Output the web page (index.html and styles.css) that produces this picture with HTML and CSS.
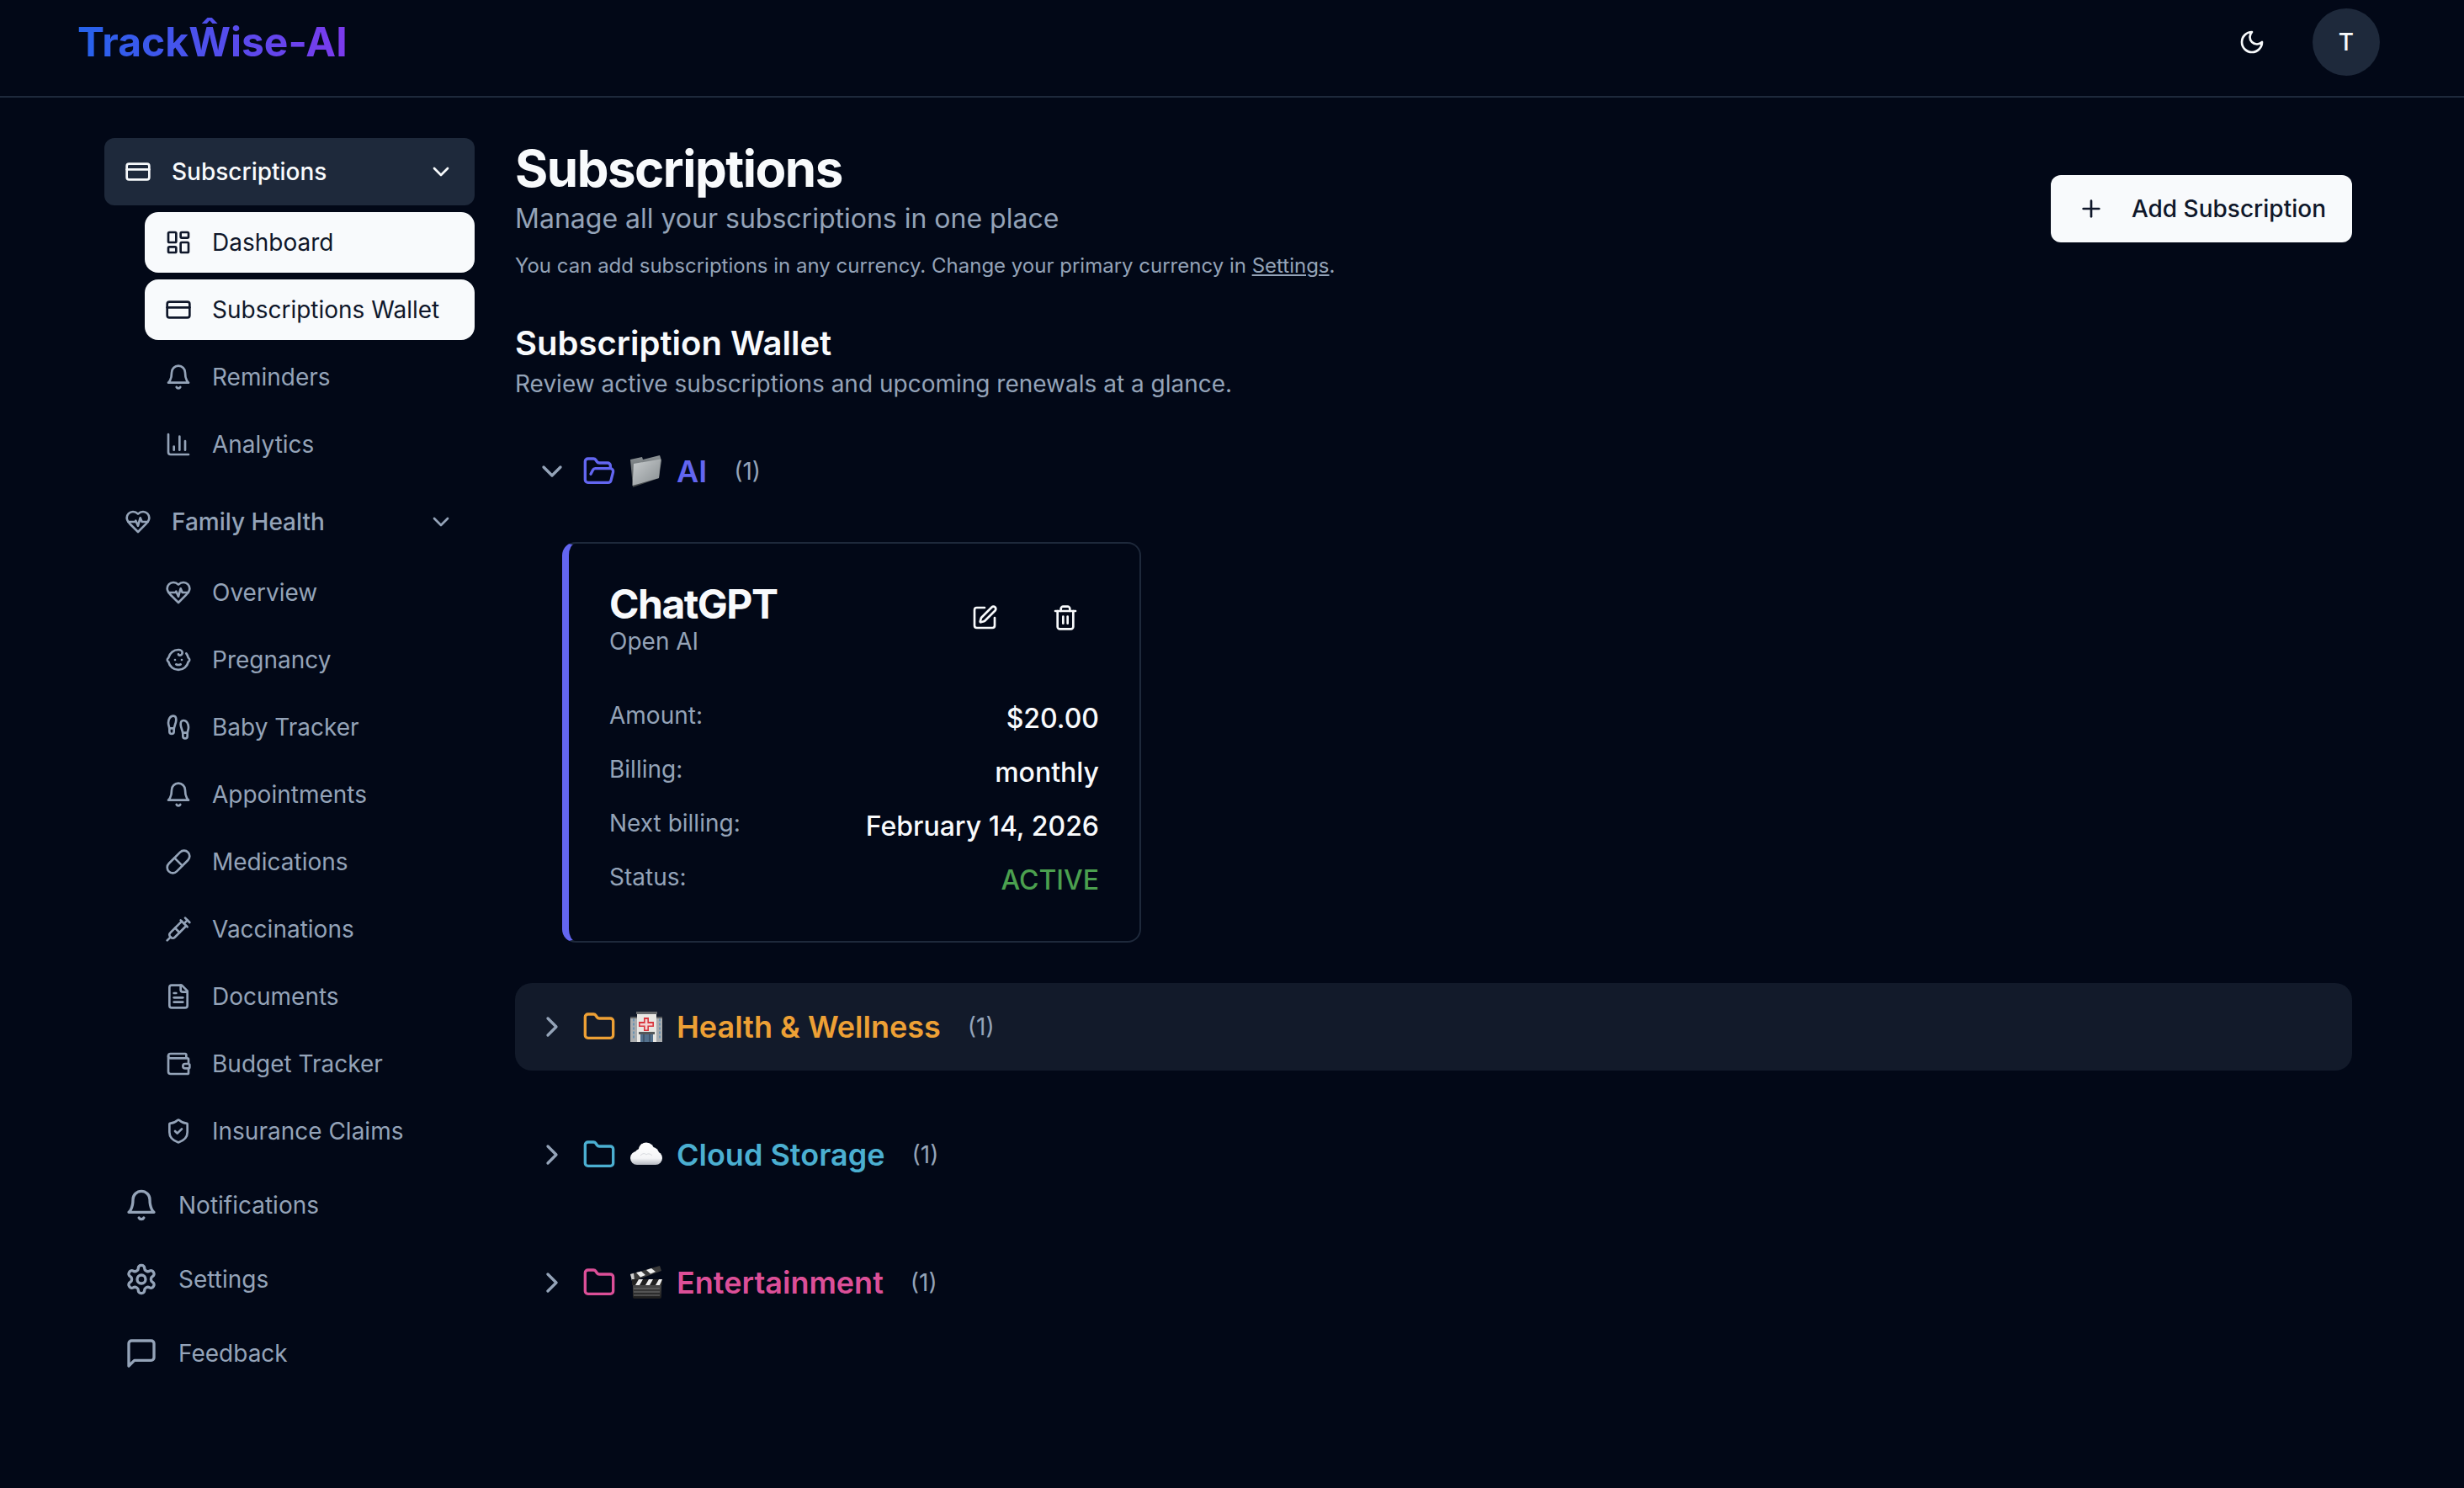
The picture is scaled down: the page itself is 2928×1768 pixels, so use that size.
FILE: index.html
```html
<!DOCTYPE html>
<html lang="en">
<head>
<meta charset="utf-8">
<title>TrackWise-AI Subscriptions</title>
<link rel="stylesheet" href="styles.css">
</head>
<body>
<svg class="sprite" aria-hidden="true">
  <defs>
    <linearGradient id="g-folder-back" x1="0" y1="0" x2="0" y2="1"><stop offset="0" stop-color="#8d9396"/><stop offset="1" stop-color="#3f4346"/></linearGradient>
    <linearGradient id="g-folder-front" x1="0" y1="0" x2="1" y2="1"><stop offset="0" stop-color="#c9cdcf"/><stop offset="1" stop-color="#878d90"/></linearGradient>
    <linearGradient id="g-cloud" gradientUnits="userSpaceOnUse" x1="0" y1="6" x2="0" y2="32"><stop offset="0" stop-color="#ffffff"/><stop offset=".7" stop-color="#f4f5f7"/><stop offset="1" stop-color="#b4b8c0"/></linearGradient>
    <linearGradient id="g-clap" x1="0" y1="0" x2="0" y2="1"><stop offset="0" stop-color="#4a4a4a"/><stop offset="1" stop-color="#1c1c1c"/></linearGradient>
  </defs>
  <symbol id="i-card" viewBox="0 0 24 24"><rect x="2" y="5" width="20" height="14" rx="2"/><path d="M2 10h20"/></symbol>
  <symbol id="i-down" viewBox="0 0 24 24"><path d="m6 9 6 6 6-6"/></symbol>
  <symbol id="i-right" viewBox="0 0 24 24"><path d="m9 18 6-6-6-6"/></symbol>
  <symbol id="i-dash" viewBox="0 0 24 24"><rect x="3" y="3" width="7" height="9" rx="1"/><rect x="14" y="3" width="7" height="5" rx="1"/><rect x="14" y="12" width="7" height="9" rx="1"/><rect x="3" y="16" width="7" height="5" rx="1"/></symbol>
  <symbol id="i-bell" viewBox="0 0 24 24"><path d="M6 8a6 6 0 0 1 12 0c0 7 3 9 3 9H3s3-2 3-9"/><path d="M10.3 21a1.94 1.94 0 0 0 3.4 0"/></symbol>
  <symbol id="i-chart" viewBox="0 0 24 24"><path d="M3 3v16a2 2 0 0 0 2 2h16"/><path d="M18 17V9"/><path d="M13 17V5"/><path d="M8 17v-3"/></symbol>
  <symbol id="i-heart" viewBox="0 0 24 24"><path d="M19 14c1.49-1.46 3-3.21 3-5.5A5.5 5.5 0 0 0 16.5 3c-1.76 0-3 .5-4.5 2-1.5-1.5-2.74-2-4.5-2A5.5 5.5 0 0 0 2 8.5c0 2.3 1.5 4.05 3 5.5l7 7Z"/><path d="M3.22 12H9.5l.5-1 2 4.5 2-7 1.5 3.5h5.27"/></symbol>
  <symbol id="i-baby" viewBox="0 0 24 24"><path d="M9 12h.01"/><path d="M15 12h.01"/><path d="M10 16c.5.3 1.2.5 2 .5s1.5-.2 2-.5"/><path d="M19 6.3a9 9 0 0 1 1.8 3.9 2 2 0 0 1 0 3.6 9 9 0 0 1-17.6 0 2 2 0 0 1 0-3.6A9 9 0 0 1 12 3c2 0 3.5 1.1 3.5 2.5s-.9 2.5-2 2.5c-.8 0-1.5-.4-1.5-1"/></symbol>
  <symbol id="i-feet" viewBox="0 0 24 24"><path d="M4 16v-2.38C4 11.5 2.97 10.5 3 8c.03-2.72 1.49-6 4.5-6C9.37 2 10 3.8 10 5.5c0 3.11-2 5.66-2 8.68V16a2 2 0 1 1-4 0Z"/><path d="M20 20v-2.38c0-2.12 1.03-3.12 1-5.62-.03-2.72-1.49-6-4.5-6C14.63 6 14 7.8 14 9.5c0 3.11 2 5.66 2 8.68V20a2 2 0 1 0 4 0Z"/><path d="M16 17h4"/><path d="M4 13h4"/></symbol>
  <symbol id="i-pill" viewBox="0 0 24 24"><path d="m10.5 20.5 10-10a4.95 4.95 0 1 0-7-7l-10 10a4.95 4.95 0 1 0 7 7Z"/><path d="m8.5 8.5 7 7"/></symbol>
  <symbol id="i-syringe" viewBox="0 0 24 24"><path d="m18 2 4 4"/><path d="m17 7 3-3"/><path d="M19 9 8.7 19.3c-1 1-2.5 1-3.4 0l-.6-.6c-1-1-1-2.5 0-3.4L15 5"/><path d="m9 11 4 4"/><path d="m5 19-3 3"/><path d="m14 4 6 6"/></symbol>
  <symbol id="i-file" viewBox="0 0 24 24"><path d="M15 2H6a2 2 0 0 0-2 2v16a2 2 0 0 0 2 2h12a2 2 0 0 0 2-2V7Z"/><path d="M14 2v4a2 2 0 0 0 2 2h4"/><path d="M10 9H8"/><path d="M16 13H8"/><path d="M16 17H8"/></symbol>
  <symbol id="i-wallet" viewBox="0 0 24 24"><path d="M19 7V4a1 1 0 0 0-1-1H5a2 2 0 0 0 0 4h15a1 1 0 0 1 1 1v4h-3a2 2 0 0 0 0 4h3a1 1 0 0 0 1-1v-2a1 1 0 0 0-1-1"/><path d="M3 5v14a2 2 0 0 0 2 2h15a1 1 0 0 0 1-1v-4"/></symbol>
  <symbol id="i-shield" viewBox="0 0 24 24"><path d="M20 13c0 5-3.5 7.5-7.66 8.95a1 1 0 0 1-.67-.01C7.5 20.5 4 18 4 13V6a1 1 0 0 1 1-1c2 0 4.5-1.2 6.24-2.72a1.17 1.17 0 0 1 1.52 0C14.51 3.81 17 5 19 5a1 1 0 0 1 1 1z"/><path d="m9 12 2 2 4-4"/></symbol>
  <symbol id="i-gear" viewBox="0 0 24 24"><path d="M12.22 2h-.44a2 2 0 0 0-2 2v.18a2 2 0 0 1-1 1.73l-.43.25a2 2 0 0 1-2 0l-.15-.08a2 2 0 0 0-2.73.73l-.22.38a2 2 0 0 0 .73 2.73l.15.1a2 2 0 0 1 1 1.72v.51a2 2 0 0 1-1 1.74l-.15.09a2 2 0 0 0-.73 2.73l.22.38a2 2 0 0 0 2.73.73l.15-.08a2 2 0 0 1 2 0l.43.25a2 2 0 0 1 1 1.73V20a2 2 0 0 0 2 2h.44a2 2 0 0 0 2-2v-.18a2 2 0 0 1 1-1.73l.43-.25a2 2 0 0 1 2 0l.15.08a2 2 0 0 0 2.73-.73l.22-.39a2 2 0 0 0-.73-2.73l-.15-.08a2 2 0 0 1-1-1.74v-.5a2 2 0 0 1 1-1.74l.15-.09a2 2 0 0 0 .73-2.73l-.22-.38a2 2 0 0 0-2.73-.73l-.15.08a2 2 0 0 1-2 0l-.43-.25a2 2 0 0 1-1-1.73V4a2 2 0 0 0-2-2z"/><circle cx="12" cy="12" r="3"/></symbol>
  <symbol id="i-msg" viewBox="0 0 24 24"><path d="M21 15a2 2 0 0 1-2 2H7l-4 4V5a2 2 0 0 1 2-2h14a2 2 0 0 1 2 2z"/></symbol>
  <symbol id="i-moon" viewBox="0 0 24 24"><path d="M12 3a6 6 0 0 0 9 9 9 9 0 1 1-9-9Z"/></symbol>
  <symbol id="i-plus" viewBox="0 0 24 24"><path d="M5 12h14"/><path d="M12 5v14"/></symbol>
  <symbol id="i-folder" viewBox="0 0 24 24"><path d="M20 20a2 2 0 0 0 2-2V8a2 2 0 0 0-2-2h-7.9a2 2 0 0 1-1.69-.9L9.6 3.9A2 2 0 0 0 7.93 3H4a2 2 0 0 0-2 2v13a2 2 0 0 0 2 2Z"/></symbol>
  <symbol id="i-folder-open" viewBox="0 0 24 24"><path d="m6 14 1.5-2.9A2 2 0 0 1 9.24 10H20a2 2 0 0 1 1.94 2.5l-1.54 6a2 2 0 0 1-1.95 1.5H4a2 2 0 0 1-2-2V5a2 2 0 0 1 2-2h3.9a2 2 0 0 1 1.69.9l.81 1.2a2 2 0 0 0 1.67.9H18a2 2 0 0 1 2 2v2"/></symbol>
  <symbol id="i-pen" viewBox="0 0 24 24"><path d="M12 3H5a2 2 0 0 0-2 2v14a2 2 0 0 0 2 2h14a2 2 0 0 0 2-2v-7"/><path d="M18.375 2.625a1 1 0 0 1 3 3l-9.013 9.014a2 2 0 0 1-.853.505l-2.873.84a.5.5 0 0 1-.62-.62l.84-2.873a2 2 0 0 1 .506-.852z"/></symbol>
  <symbol id="i-trash" viewBox="0 0 24 24"><path d="M3 6h18"/><path d="M19 6v14c0 1-1 2-2 2H7c-1 0-2-1-2-2V6"/><path d="M8 6V4c0-1 1-2 2-2h4c1 0 2 1 2 2v2"/><path d="M10 11v6"/><path d="M14 11v6"/></symbol>
</svg>

<header class="topbar">
  <div class="logo">TrackŴise-AI</div>
  <div class="top-actions">
    <button class="icon-btn light"><svg class="icon i32"><use href="#i-moon"/></svg></button>
    <div class="avatar">T</div>
  </div>
</header>

<div class="layout">
  <nav class="sidebar">
    <div class="nav-group">
      <div class="nav-parent active"><svg class="icon i32"><use href="#i-card"/></svg><span class="grow">Subscriptions</span><svg class="icon i32"><use href="#i-down"/></svg></div>
      <div class="nav-sub">
        <a class="nav-item selected"><svg class="icon i32"><use href="#i-dash"/></svg>Dashboard</a>
        <a class="nav-item selected"><svg class="icon i32"><use href="#i-card"/></svg>Subscriptions Wallet</a>
        <a class="nav-item"><svg class="icon i32"><use href="#i-bell"/></svg>Reminders</a>
        <a class="nav-item"><svg class="icon i32"><use href="#i-chart"/></svg>Analytics</a>
      </div>
    </div>
    <div class="nav-group">
      <div class="nav-parent"><svg class="icon i32"><use href="#i-heart"/></svg><span class="grow">Family Health</span><svg class="icon i32"><use href="#i-down"/></svg></div>
      <div class="nav-sub">
        <a class="nav-item"><svg class="icon i32"><use href="#i-heart"/></svg>Overview</a>
        <a class="nav-item"><svg class="icon i32"><use href="#i-baby"/></svg>Pregnancy</a>
        <a class="nav-item"><svg class="icon i32"><use href="#i-feet"/></svg>Baby Tracker</a>
        <a class="nav-item"><svg class="icon i32"><use href="#i-bell"/></svg>Appointments</a>
        <a class="nav-item"><svg class="icon i32"><use href="#i-pill"/></svg>Medications</a>
        <a class="nav-item"><svg class="icon i32"><use href="#i-syringe"/></svg>Vaccinations</a>
        <a class="nav-item"><svg class="icon i32"><use href="#i-file"/></svg>Documents</a>
        <a class="nav-item"><svg class="icon i32"><use href="#i-wallet"/></svg>Budget Tracker</a>
        <a class="nav-item"><svg class="icon i32"><use href="#i-shield"/></svg>Insurance Claims</a>
      </div>
    </div>
    <a class="nav-top"><svg class="icon i40"><use href="#i-bell"/></svg>Notifications</a>
    <a class="nav-top"><svg class="icon i40"><use href="#i-gear"/></svg>Settings</a>
    <a class="nav-top"><svg class="icon i40"><use href="#i-msg"/></svg>Feedback</a>
  </nav>

  <main class="content">
    <section class="page-head">
      <div>
        <h1 class="page-title">Subscriptions</h1>
        <p class="page-sub">Manage all your subscriptions in one place</p>
        <p class="page-note">You can add subscriptions in any currency. Change your primary currency in <a class="link">Settings</a>.</p>
      </div>
      <button class="add-btn"><svg class="icon i32"><use href="#i-plus"/></svg>Add Subscription</button>
    </section>

    <section class="wallet-head">
      <h2 class="wallet-title">Subscription Wallet</h2>
      <p class="wallet-sub">Review active subscriptions and upcoming renewals at a glance.</p>
    </section>

    <section class="groups">
      <div class="group">
        <div class="group-row c-ai">
          <svg class="icon i40 chev"><use href="#i-down"/></svg>
          <svg class="icon i40"><use href="#i-folder-open"/></svg>
          <svg class="emoji" viewBox="0 0 40 40"><path d="M1 6 L15 3 L16 6 L36 1 L38 7 L35 28 L4 39 Z" fill="url(#g-folder-back)"/><path d="M5 11 L37 5.500 L35 28 L3.500 37 Z" fill="url(#g-folder-front)"/></svg>
          <span class="group-name">AI</span>
          <span class="group-count">(1)</span>
        </div>
        <div class="group-body">
          <article class="card">
            <div class="card-head">
              <div>
                <h3 class="card-title">ChatGPT</h3>
                <p class="card-sub">Open AI</p>
              </div>
              <div class="card-actions">
                <button class="icon-btn light"><svg class="icon i32"><use href="#i-pen"/></svg></button>
                <button class="icon-btn light"><svg class="icon i32"><use href="#i-trash"/></svg></button>
              </div>
            </div>
            <dl class="card-rows">
              <div class="card-row"><dt>Amount:</dt><dd>$20.00</dd></div>
              <div class="card-row"><dt>Billing:</dt><dd>monthly</dd></div>
              <div class="card-row"><dt>Next billing:</dt><dd>February 14, 2026</dd></div>
              <div class="card-row"><dt>Status:</dt><dd class="status">ACTIVE</dd></div>
            </dl>
          </article>
        </div>
      </div>

      <div class="group-row hover c-health">
        <svg class="icon i40 chev"><use href="#i-right"/></svg>
        <svg class="icon i40"><use href="#i-folder"/></svg>
        <svg class="emoji" viewBox="0 0 40 40"><rect x="1" y="8" width="38" height="30" fill="#a9acae"/><rect x="1" y="8" width="38" height="2" fill="#5a5d60"/><rect x="9" y="4" width="23" height="34" fill="#e8e7e3"/><rect x="8" y="2" width="25" height="3" fill="#66696c"/><path d="M17 9h6v5h6v6h-6v5h-6v-5h-6v-6h6z" fill="#d9363e"/><path d="M18.600 11h2.800v5h6v2.400h-6v5h-2.800v-5h-6V16h6z" fill="#f3d3d3"/><rect x="11" y="26" width="19" height="3" fill="#55585a"/><rect x="13" y="29" width="15" height="9" fill="#53708c"/><path d="M17 29v9M24 29v9" stroke="#2e3f50"/><path d="M4 12h2M4 17h2M4 22h2M4 27h2M4 32h2M35 12h2M35 17h2M35 22h2M35 27h2M35 32h2" stroke="#6b93b1" stroke-width="3"/></svg>
        <span class="group-name">Health &amp; Wellness</span>
        <span class="group-count">(1)</span>
      </div>

      <div class="group-row c-cloud">
        <svg class="icon i40 chev"><use href="#i-right"/></svg>
        <svg class="icon i40"><use href="#i-folder"/></svg>
        <svg class="emoji" viewBox="0 0 40 40"><g fill="url(#g-cloud)"><circle cx="20" cy="15" r="9.500"/><circle cx="9" cy="24" r="8"/><circle cx="31" cy="24" r="8"/><circle cx="13" cy="20" r="7"/><circle cx="27" cy="19" r="8"/><rect x="9" y="20" width="22" height="12"/></g><path d="M13 21c3-3 5-3 7-1 2-2 5-1 7 1" fill="none" stroke="#d5d8dd"/></svg>
        <span class="group-name">Cloud Storage</span>
        <span class="group-count">(1)</span>
      </div>

      <div class="group-row c-ent">
        <svg class="icon i40 chev"><use href="#i-right"/></svg>
        <svg class="icon i40"><use href="#i-folder"/></svg>
        <svg class="emoji" viewBox="0 0 40 40"><path d="M1 10 L36 0 L38 6 L5 18 Z" fill="#3a3a3a"/><path d="M8 8 L14 6.500 L19 11 L13 13.500 Z M20 5 L26 3 L31 7 L25 9.500 Z" fill="#eee"/><path d="M1 10 L5 8.800 L6 17.500 L3 18 Z" fill="#cfcfcf"/><rect x="4" y="22" width="34" height="17" rx="2" fill="url(#g-clap)"/><rect x="3" y="16" width="36" height="7" fill="#222"/><path d="M7 23 L11 16 H16 L12 23 Z M19 23 L23 16 H28 L24 23 Z M31 23 L35 16 H39 L36 23 Z" fill="#eee"/><path d="M5 27h31M5 31h31M5 35h31" stroke="#777" stroke-width="1"/></svg>
        <span class="group-name">Entertainment</span>
        <span class="group-count">(1)</span>
      </div>
    </section>
  </main>
</div>
</body>
</html>
```

FILE: styles.css
```css
* { box-sizing: border-box; }
html, body { margin: 0; padding: 0; }
body {
  min-height: 1768px;
  background: #020817;
  color: #f8fafc;
  font-family: Inter, "Noto Sans", sans-serif;
  font-size: 28px;
  line-height: 40px;
  overflow: hidden;
}
h1, h2, h3, p, dl, dd { margin: 0; }
button { font: inherit; border: 0; background: none; padding: 0; color: inherit; }

.sprite { position: absolute; width: 0; height: 0; }
.icon {
  fill: none;
  stroke: currentColor;
  stroke-width: 2;
  stroke-linecap: round;
  stroke-linejoin: round;
  flex: none;
}
.i32 { width: 32px; height: 32px; }
.i40 { width: 40px; height: 40px; }

.topbar {
  display: flex;
  justify-content: space-between;
  align-items: flex-start;
  height: 116px;
  padding: 10px 100px 0 92px;
  border-bottom: 2px solid #1e293b;
}
.logo {
  font-size: 48px;
  font-weight: 700;
  line-height: 80px;
  background: linear-gradient(90deg, #2563eb, #7c3aed);
  -webkit-background-clip: text;
  background-clip: text;
  color: transparent;
}
.top-actions { display: flex; align-items: center; gap: 32px; }
.icon-btn {
  width: 80px;
  height: 80px;
  display: flex;
  align-items: center;
  justify-content: center;
  color: #f8fafc;
}
.avatar {
  width: 80px;
  height: 80px;
  border-radius: 50%;
  background: #1e293b;
  display: flex;
  align-items: center;
  justify-content: center;
  font-weight: 500;
}

.layout {
  display: flex;
  gap: 48px;
  padding: 48px 133px 0 124px;
}
.sidebar {
  width: 440px;
  flex: none;
  display: flex;
  flex-direction: column;
  gap: 16px;
  color: #94a3b8;
}
.nav-group { display: flex; flex-direction: column; gap: 8px; }
.nav-parent {
  display: flex;
  align-items: center;
  gap: 24px;
  height: 80px;
  padding: 0 24px;
  border-radius: 12px;
  font-weight: 500;
}
.nav-parent.active { background: #1e293b; color: #f8fafc; }
.grow { flex: 1; }
.nav-sub {
  display: flex;
  flex-direction: column;
  gap: 8px;
  margin-left: 48px;
}
.nav-item {
  display: flex;
  align-items: center;
  gap: 24px;
  height: 72px;
  padding: 0 24px;
  border-radius: 16px;
}
.nav-item.selected { background: #f8fafc; color: #0f172a; }
.nav-top {
  display: flex;
  align-items: center;
  gap: 24px;
  height: 72px;
  padding: 0 24px;
}

.content { flex: 1; min-width: 0; }
.page-head {
  display: flex;
  justify-content: space-between;
  align-items: center;
}
.page-title {
  font-size: 60px;
  line-height: 72px;
  font-weight: 700;
  letter-spacing: -1.5px;
}
.page-sub { font-size: 32px; line-height: 48px; color: #94a3b8; }
.page-note { font-size: 24px; line-height: 32px; margin-top: 16px; color: #94a3b8; }
.link { text-decoration: underline; }
.add-btn {
  display: flex;
  align-items: center;
  gap: 32px;
  height: 80px;
  padding: 0 31px 0 32px;
  border-radius: 12px;
  background: #f8fafc;
  color: #0f172a;
  font-weight: 500;
}

.wallet-head { margin-top: 48px; }
.wallet-title { font-size: 40px; line-height: 56px; font-weight: 600; }
.wallet-sub { line-height: 40px; font-size: 28px; color: #94a3b8; }

.groups {
  margin-top: 32px;
  display: flex;
  flex-direction: column;
  gap: 48px;
}
.group-row {
  display: flex;
  align-items: center;
  gap: 16px;
  height: 104px;
  padding: 0 24px;
  border-radius: 20px;
}
.group-row.hover { background: #121a2a; }
.chev { color: #94a3b8; }
.emoji { width: 40px; height: 40px; flex: none; }
.group-name { font-size: 36px; line-height: 48px; font-weight: 600; }
.group-count { font-size: 28px; color: #94a3b8; margin-left: 16px; }
.c-ai { color: #6366f1; }
.c-health { color: #eda035; }
.c-cloud { color: #4bafd1; }
.c-ent { color: #dc4f98; }

.group-body { padding: 32px 0 0 56px; }
.card {
  width: 688px;
  padding: 48px;
  border: 2px solid #1e293b;
  border-left: 8px solid #6366f1;
  border-radius: 16px;
}
.card-head { display: flex; justify-content: space-between; align-items: flex-start; }
.card-title { font-size: 48px; line-height: 48px; font-weight: 700; letter-spacing: -1.5px; }
.card-sub { color: #94a3b8; }
.card-actions { display: flex; gap: 16px; }
.card-rows { margin-top: 48px; display: flex; flex-direction: column; gap: 16px; }
.card-row { display: flex; justify-content: space-between; align-items: flex-start; }
.card-row dt { color: #94a3b8; }
.card-row dd { font-size: 32px; line-height: 48px; font-weight: 500; }
.card-row dd.status { color: #4ba04f; }
```
